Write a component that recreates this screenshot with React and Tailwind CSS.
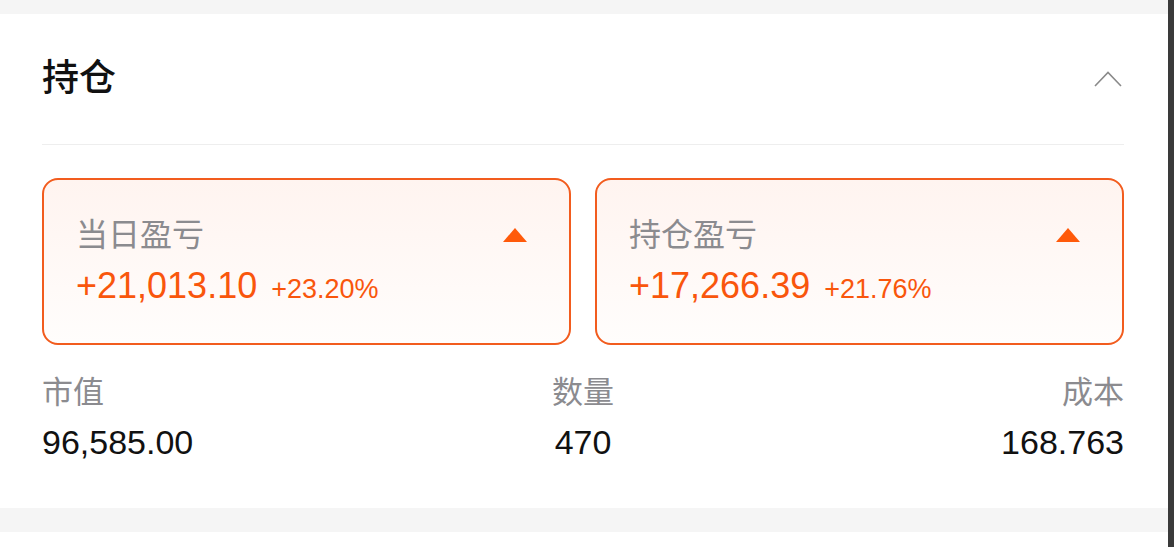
const ORANGE = "text-[#f9560c]";

const PnlCard = ({ label, value, percent }) => (
    <div className="flex-1 h-[167px] rounded-[16px] border-2 border-[#f25c1e] bg-gradient-to-b from-[#fff4f0] to-[#fffdfc] pl-[32px] pr-[42px] pt-[35px]">
        <div className="flex items-center justify-between h-[40px]">
            <span className="text-[32px] leading-[40px] text-[#8b8b8f]">{label}</span>
            <svg width="24" height="14" viewBox="0 0 24 14" className="block">
                <polygon points="12,0 24,14 0,14" fill="#ff5a0a" />
            </svg>
        </div>
        <div className={`mt-[11px] flex items-baseline gap-[14px] ${ORANGE}`}>
            <span className="text-[36px] leading-[40px]">{value}</span>
            <span className="text-[27px] leading-[40px]">{percent}</span>
        </div>
    </div>
);

const Stat = ({ label, value, align }) => (
    <div className={align}>
        <div className="text-[31px] leading-[40px] text-[#8b8b8f]">{label}</div>
        <div className="mt-[9px] text-[34px] leading-[40px] text-[#111]">{value}</div>
    </div>
);

export default function App() {
    return (
        <div
            className="flex w-[1174px] h-[547px] bg-[#f5f5f5] overflow-hidden"
            style={{ fontFamily: '"Liberation Sans", "Noto Sans CJK SC", sans-serif' }}
        >
            <div className="w-[1168px] pt-[14px]">
                <div className="bg-white pl-[42px] pr-[44px] h-[494px]">
                    <div className="flex items-center justify-between h-[130px]">
                        <h2 className="text-[37px] leading-[48px] font-medium text-[#111]">持仓</h2>
                        <svg width="30" height="18" viewBox="0 0 30 18" className="mr-[1px]" fill="none">
                            <polyline points="2,16 15,2.5 28,16" stroke="#8a8a8a" strokeWidth="1.6" />
                        </svg>
                    </div>
                    <div className="h-px bg-[#eeeeee]" />

                    <div className="flex gap-[24px] mt-[33px]">
                        <PnlCard label="当日盈亏" value="+21,013.10" percent="+23.20%" />
                        <PnlCard label="持仓盈亏" value="+17,266.39" percent="+21.76%" />
                    </div>

                    <div className="grid grid-cols-3 mt-[28px]">
                        <Stat label="市值" value="96,585.00" align="text-left" />
                        <Stat label="数量" value="470" align="text-center" />
                        <Stat label="成本" value="168.763" align="text-right" />
                    </div>
                </div>
                <div className="h-[24px]" />
                <div className="bg-white h-[20px]" />
            </div>
            <div className="w-[6px] h-full bg-[#3a3a3a]" />
        </div>
    );
}
